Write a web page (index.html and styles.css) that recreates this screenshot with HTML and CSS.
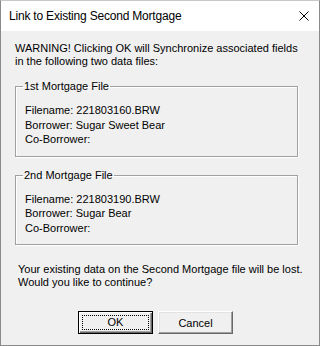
FILE: index.html
```html
<html>
<head>
    <meta charset="utf-8">
    <title>Link to Existing Second Mortgage</title>
    <link rel="stylesheet" href="styles.css">
</head>
<body>
    <div class="window">
        <div class="titlebar">
            <span class="title">Link to Existing Second Mortgage</span>
            <svg class="close" width="10" height="10" viewBox="0 0 10 10">
                <path d="M0.5 0.5 L9.5 9.5 M9.5 0.5 L0.5 9.5" stroke="#000" stroke-width="1" fill="none"/>
            </svg>
        </div>
        <div class="content">
            <p class="warning">WARNING! Clicking OK will Synchronize associated fields<br>in the following two data files:</p>

            <fieldset class="group">
                <legend>1st Mortgage File</legend>
                <div class="line">Filename: 221803160.BRW</div>
                <div class="line">Borrower: Sugar Sweet Bear</div>
                <div class="line">Co-Borrower:</div>
            </fieldset>

            <fieldset class="group">
                <legend>2nd Mortgage File</legend>
                <div class="line">Filename: 221803190.BRW</div>
                <div class="line">Borrower: Sugar Bear</div>
                <div class="line">Co-Borrower:</div>
            </fieldset>

            <p class="question">Your existing data on the Second Mortgage file will be lost.<br>Would you like to continue?</p>

            <div class="buttons">
                <button class="btn default"><span class="focus">OK</span></button>
                <button class="btn">Cancel</button>
            </div>
        </div>
    </div>
</body>
</html>
```

FILE: styles.css
```css
* {
    margin: 0;
    padding: 0;
    box-sizing: border-box;
}
body {
    background-color: #f0f0f0;
    font-family: "Liberation Sans", Arial, sans-serif;
    font-size: 11px;
    color: #000;
}
.window {
    width: 320px;
    height: 346px;
    border: 1px solid #8a8a8a;
    border-top-color: #c8c8c8;
    background-color: #f0f0f0;
}
.titlebar {
    height: 30px;
    background-color: #fff;
    display: flex;
    align-items: center;
    justify-content: space-between;
    padding-left: 8px;
    padding-right: 10px;
}
.title {
    font-family: "Liberation Sans", Arial, sans-serif;
    font-size: 12px;
    letter-spacing: -0.2px;
    line-height: 16px;
}
.content {
    padding-top: 11px;
}
.warning {
    line-height: 13px;
    margin-left: 14px;
}
.group {
    margin: 12px 0 0 14px;
    width: 283px;
    border: 1px solid #a0a0a0;
    box-shadow: 1px 1px 0 #fff, inset 1px 1px 0 #fff;
    padding: 10px 9px 9px 9px;
}
.group legend {
    line-height: 13px;
    padding: 0 1px;
    margin-left: -2px;
}
.line {
    line-height: 14.5px;
}
.question {
    line-height: 13px;
    margin: 18px 0 0 17px;
}
.buttons {
    display: flex;
    gap: 5px;
    margin: 22px 0 0 77px;
}
.btn {
    width: 75px;
    height: 23px;
    font-family: "Liberation Sans", Arial, sans-serif;
    font-size: 11px;
    color: #000;
    background-color: #f0f0f0;
    border: 1px solid;
    border-color: #fff #696969 #696969 #fff;
    box-shadow: inset -1px -1px 0 #a0a0a0, inset 1px 1px 0 #e3e3e3;
}
.btn.default {
    border: 1px solid #000;
    box-shadow: inset 1px 1px 0 #fff, inset -1px -1px 0 #696969, inset -2px -2px 0 #a0a0a0;
    padding: 3px;
}
.focus {
    display: block;
    height: 100%;
    border: 1px dotted #000;
    line-height: 13px;
}
```
